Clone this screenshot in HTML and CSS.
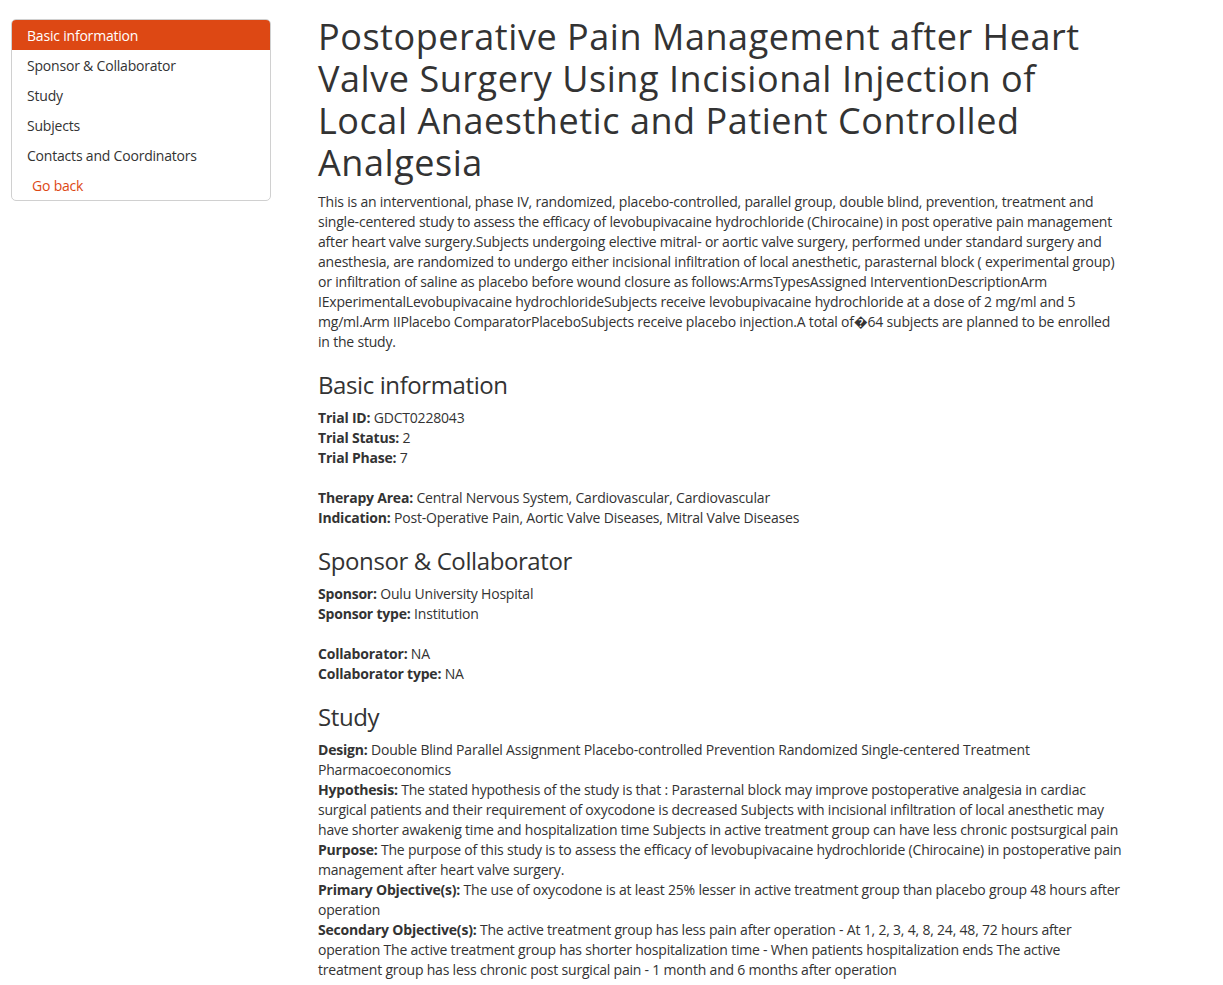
FILE: index.html
```html
<!DOCTYPE html>
<html lang="en">
<head>
<meta charset="utf-8">
<title>Postoperative Pain Management after Heart Valve Surgery</title>
<link rel="stylesheet" href="styles.css">
</head>
<body>
<div class="page">
  <aside class="sidebar">
    <nav class="nav-box">
      <a class="nav-item active" href="#basic">Basic information</a>
      <a class="nav-item" href="#sponsor">Sponsor &amp; Collaborator</a>
      <a class="nav-item" href="#study">Study</a>
      <a class="nav-item" href="#subjects">Subjects</a>
      <a class="nav-item" href="#contacts">Contacts and Coordinators</a>
      <a class="nav-item back" href="#">Go back</a>
    </nav>
  </aside>
  <main class="content">
    <h1 class="title">Postoperative Pain Management after Heart Valve Surgery Using Incisional Injection of Local Anaesthetic and Patient Controlled Analgesia</h1>
    <p class="summary">This is an interventional, phase IV, randomized, placebo-controlled, parallel group, double blind, prevention, treatment and single-centered study to assess the efficacy of levobupivacaine hydrochloride (Chirocaine) in post operative pain management after heart valve surgery.Subjects undergoing elective mitral- or aortic valve surgery, performed under standard surgery and anesthesia, are randomized to undergo either incisional infiltration of local anesthetic, parasternal block ( experimental group) or infiltration of saline as placebo before wound closure as follows:ArmsTypesAssigned InterventionDescriptionArm IExperimentalLevobupivacaine hydrochlorideSubjects receive levobupivacaine hydrochloride at a dose of 2 mg/ml and 5 mg/ml.Arm IIPlacebo ComparatorPlaceboSubjects receive placebo injection.A total of&#xFFFD;64 subjects are planned to be enrolled in the study.</p>

    <section id="basic" class="section">
      <h2 class="section-title">Basic information</h2>
      <div class="fields">
        <div class="field"><b class="label">Trial ID:</b> GDCT0228043</div>
        <div class="field"><b class="label">Trial Status:</b> 2</div>
        <div class="field"><b class="label">Trial Phase:</b> 7</div>
        <div class="spacer"></div>
        <div class="field"><b class="label">Therapy Area:</b> Central Nervous System, Cardiovascular, Cardiovascular</div>
        <div class="field"><b class="label">Indication:</b> Post-Operative Pain, Aortic Valve Diseases, Mitral Valve Diseases</div>
      </div>
    </section>

    <section id="sponsor" class="section">
      <h2 class="section-title">Sponsor &amp; Collaborator</h2>
      <div class="fields">
        <div class="field"><b class="label">Sponsor:</b> Oulu University Hospital</div>
        <div class="field"><b class="label">Sponsor type:</b> Institution</div>
        <div class="spacer"></div>
        <div class="field"><b class="label">Collaborator:</b> NA</div>
        <div class="field"><b class="label">Collaborator type:</b> NA</div>
      </div>
    </section>

    <section id="study" class="section">
      <h2 class="section-title">Study</h2>
      <div class="fields">
        <div class="field"><b class="label">Design:</b> Double Blind Parallel Assignment Placebo-controlled Prevention Randomized Single-centered Treatment Pharmacoeconomics</div>
        <div class="field"><b class="label">Hypothesis:</b> The stated hypothesis of the study is that : Parasternal block may improve postoperative analgesia in cardiac surgical patients and their requirement of oxycodone is decreased Subjects with incisional infiltration of local anesthetic may have shorter awakenig time and hospitalization time Subjects in active treatment group can have less chronic postsurgical pain</div>
        <div class="field"><b class="label">Purpose:</b> The purpose of this study is to assess the efficacy of levobupivacaine hydrochloride (Chirocaine) in postoperative pain management after heart valve surgery.</div>
        <div class="field"><b class="label">Primary Objective(s):</b> The use of oxycodone is at least 25% lesser in active treatment group than placebo group 48 hours after operation</div>
        <div class="field"><b class="label">Secondary Objective(s):</b> The active treatment group has less pain after operation - At 1, 2, 3, 4, 8, 24, 48, 72 hours after operation The active treatment group has shorter hospitalization time - When patients hospitalization ends The active treatment group has less chronic post surgical pain - 1 month and 6 months after operation</div>
      </div>
    </section>
  </main>
</div>
</body>
</html>
```

FILE: styles.css
```css
* { box-sizing: border-box; }
html, body { margin: 0; padding: 0; background: #fff; }
body {
  font-family: "Open Sans", "Noto Sans", "DejaVu Sans", sans-serif;
  font-size: 14px;
  line-height: 20px;
  letter-spacing: -0.2px;
  color: #333;
}
.page {
  display: flex;
  align-items: flex-start;
  padding: 19px 0 0 11px;
}
.sidebar {
  width: 260px;
  flex: none;
}
.nav-box {
  display: flex;
  flex-direction: column;
  border: 1px solid #d0d0d0;
  border-radius: 5px;
  overflow: hidden;
  background: #fff;
}
.nav-item {
  display: block;
  height: 30px;
  line-height: 31px;
  padding: 0 15px;
  color: #333;
  text-decoration: none;
}
.nav-item.active {
  background: #dd4814;
  color: #fff;
  font-weight: 500;
}
.nav-item.back {
  color: #dd4814;
  padding-left: 20px;
}
.content {
  margin-left: 47px;
  width: 805px;
  flex: none;
  margin-top: -3px;
}
.title {
  margin: 0 0 8px;
  font-size: 36px;
  line-height: 42px;
  letter-spacing: 0.55px;
  font-weight: 400;
  color: #333;
}
.summary {
  margin: 0;
}
.section-title {
  margin: 18px 0 8px;
  font-size: 24px;
  line-height: 30px;
  letter-spacing: -0.4px;
  font-weight: 400;
  color: #333;
}
.field { display: block; }
.label { font-weight: 700; }
.spacer { height: 20px; }
```
